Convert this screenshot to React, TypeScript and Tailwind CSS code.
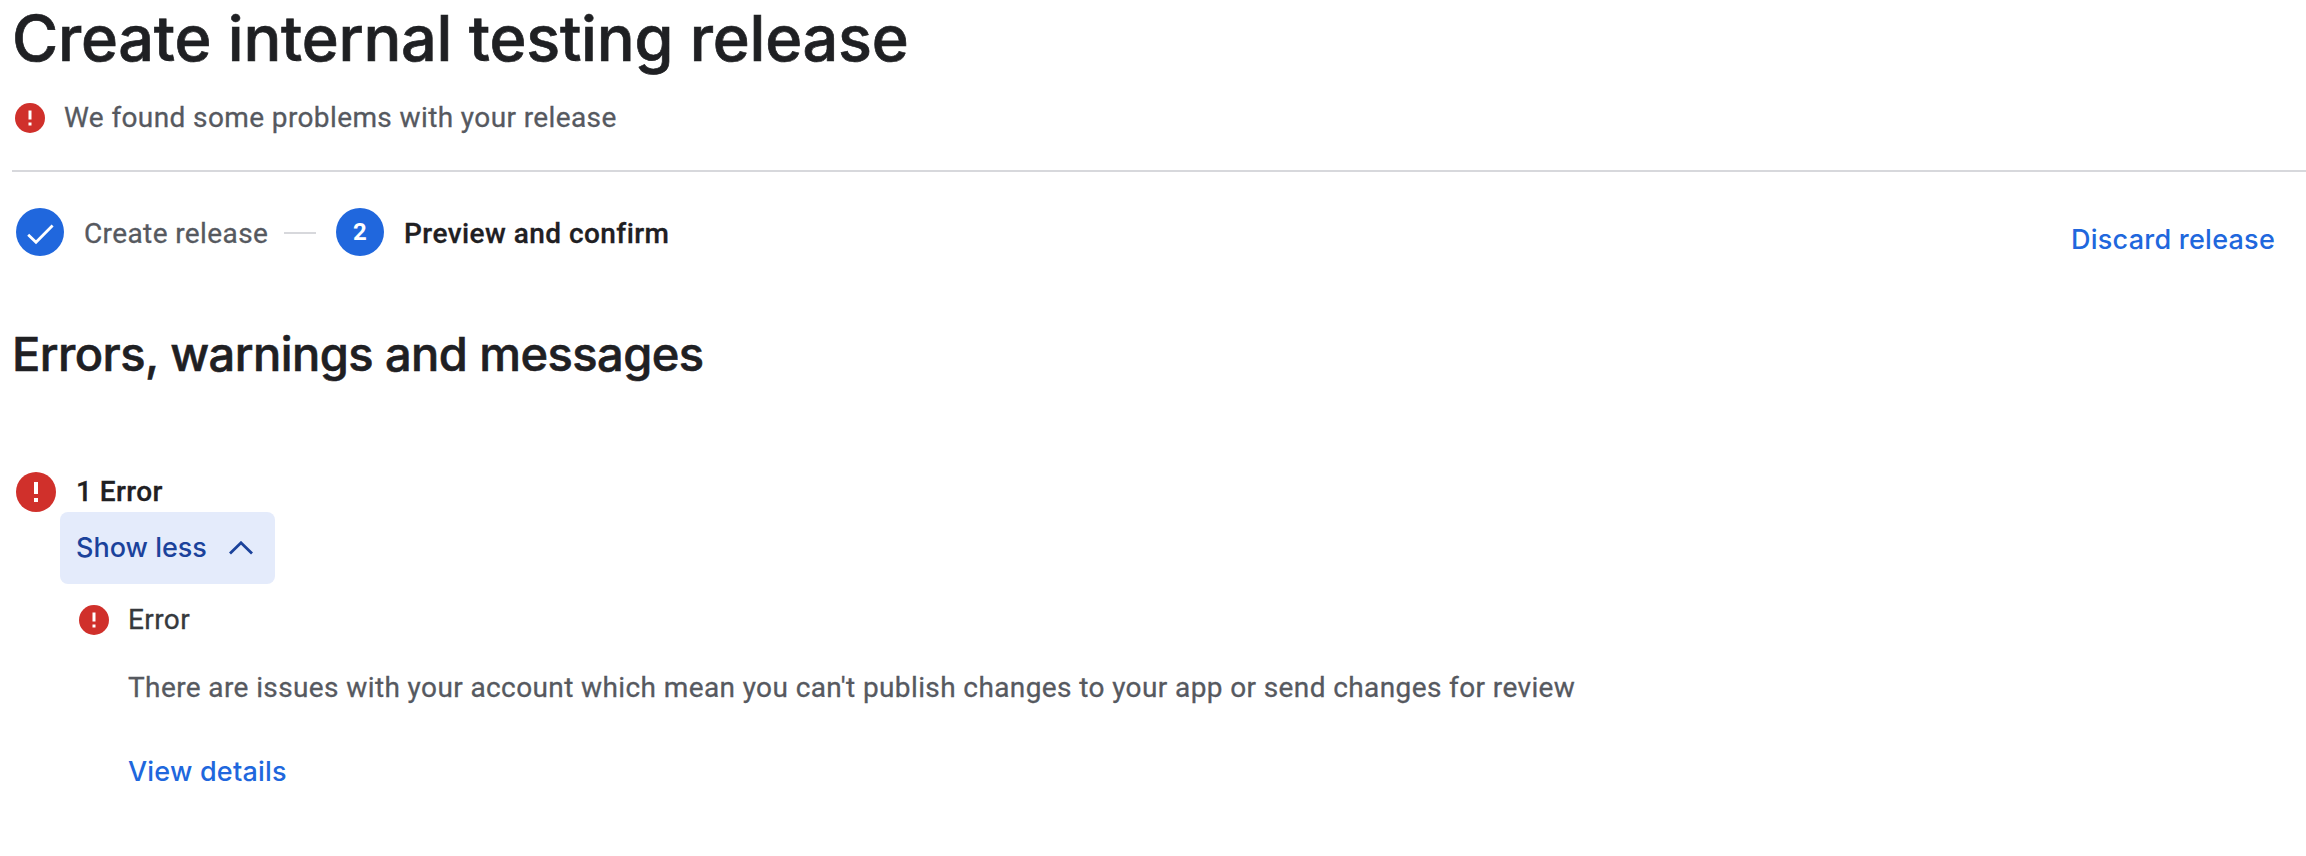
function ErrorIcon({ className }: { className: string }) {
  return (
    <svg viewBox="2 2 20 20" className={className} aria-hidden="true">
      <circle cx="12" cy="12" r="10" fill="#d0302b" />
      <path d="M11 7h2v6h-2zM11 15h2v2h-2z" fill="#fff" />
    </svg>
  );
}

function Header() {
  return (
    <header className="ml-3 border-b-2 border-[#d7d8dc] pb-8">
      <h1 className="h-[98px] whitespace-nowrap font-[Inter,sans-serif] text-[63px] font-medium leading-[76px] tracking-[-0.23px] [-webkit-text-stroke:0.7px]">
        Create internal testing release
      </h1>
      <div className="flex h-10 items-center pl-[3px]">
        <ErrorIcon className="size-[30px]" />
        <p className="ml-[19px] leading-10 tracking-[0.39px] text-[#56595f] [-webkit-text-stroke:0.3px]">
          We found some problems with your release
        </p>
      </div>
    </header>
  );
}

function Stepper() {
  return (
    <div className="mt-9 flex items-start justify-between pl-4 pr-[31px]">
      <ol className="flex h-12 items-center">
        <li className="flex items-center">
          <span className="flex size-12 items-center justify-center rounded-full bg-[#2067dd]">
            <svg viewBox="0 0 48 48" className="size-12" fill="none" stroke="#fff" strokeWidth="2.8">
              <path d="M12.2 26.7L20 34.2L36.6 17.4" />
            </svg>
          </span>
          <span className="ml-5 w-[184px] pt-1 leading-[46px] tracking-[0.39px] text-[#56595f] [-webkit-text-stroke:0.3px]">
            Create release
          </span>
        </li>
        <li className="ml-4 mt-0.5 h-0.5 w-8 bg-[#d7d8dc]" />
        <li className="ml-5 flex items-center">
          <span className="flex size-12 items-center justify-center rounded-full bg-[#2067dd] text-2xl font-bold leading-none text-white">
            2
          </span>
          <span className="ml-5 pt-1 font-medium leading-[46px] tracking-[0.45px] [-webkit-text-stroke:0.3px]">
            Preview and confirm
          </span>
        </li>
      </ol>
      <button className="mt-2 font-[Inter,sans-serif] text-[27px] font-medium leading-[48px] tracking-[0.25px] text-[#2067dd]">
        Discard release
      </button>
    </div>
  );
}

function ErrorGroup() {
  return (
    <section className="mt-[90px] pl-4">
      <div className="flex h-10 items-start">
        <ErrorIcon className="size-10" />
        <h3 className="ml-5 font-medium leading-10 tracking-[0.4px] [-webkit-text-stroke:0.3px]">1 Error</h3>
      </div>
      <button className="ml-11 flex h-[72px] w-[215px] items-center rounded-lg bg-[#e4ebfb] pl-4 text-[#1b429b]">
        <span className="pb-px font-[Inter,sans-serif] text-[27px] font-medium leading-10">Show less</span>
        <svg viewBox="0 0 24 14" className="ml-[22px] h-3.5 w-6 shrink-0" fill="none" stroke="currentColor" strokeWidth="2.8">
          <path d="M1 12.6L12 1.8L23 12.6" />
        </svg>
      </button>
      <div className="mt-4 flex h-10 items-center pl-[63px]">
        <ErrorIcon className="size-[30px]" />
        <h4 className="ml-[19px] leading-10 tracking-[0.4px] text-[#36393d] [-webkit-text-stroke:0.3px]">Error</h4>
      </div>
      <div className="pl-28">
        <p className="mt-7 leading-10 tracking-[0.39px] text-[#56595f] [-webkit-text-stroke:0.3px]">
          There are issues with your account which mean you can't publish changes to your app or send changes for review
        </p>
        <a className="mt-11 block font-[Inter,sans-serif] text-[27px] font-medium leading-10 tracking-[0.2px] text-[#2067dd]">
          View details
        </a>
      </div>
    </section>
  );
}

export default function App() {
  return (
    <main className="h-[856px] overflow-hidden whitespace-nowrap bg-white font-[Roboto,sans-serif] text-[28px] leading-[48px] text-[#1f2023]">
      <Header />
      <Stepper />
      <h2 className="mt-[62px] pl-3 font-[Inter,sans-serif] text-[47px] font-medium leading-[56px] tracking-[-0.55px] [-webkit-text-stroke:0.6px]">
        Errors, warnings and messages
      </h2>
      <ErrorGroup />
    </main>
  );
}
